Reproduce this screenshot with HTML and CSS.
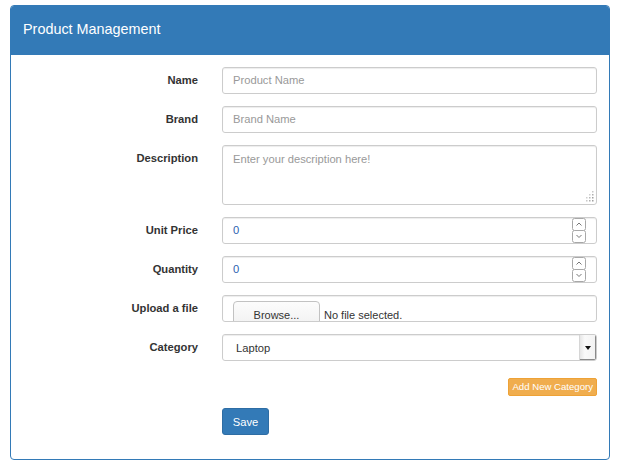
FILE: index.html
```html
<!DOCTYPE html>
<html lang="en">
<head>
<meta charset="utf-8">
<title>Product Management</title>
<link rel="stylesheet" href="styles.css">
</head>
<body>
<div class="panel">
  <div class="panel-heading">Product Management</div>
  <div class="panel-body">
    <form class="form">
      <label class="lbl">Name</label>
      <div class="control"><span class="ph">Product Name</span></div>

      <label class="lbl">Brand</label>
      <div class="control"><span class="ph">Brand Name</span></div>

      <label class="lbl">Description</label>
      <div class="control textarea">
        <span class="ph ta-ph">Enter your description here!</span>
        <svg class="grip" width="10" height="11" viewBox="0 0 10 11">
          <rect x="8" y="0" width="1.5" height="1.5" fill="#c8c8c8"/>
          <rect x="8" y="3" width="1.5" height="1.5" fill="#b0b0b0"/>
          <rect x="5" y="3" width="1.5" height="1.5" fill="#d0d0d0"/>
          <rect x="8" y="6" width="1.5" height="1.5" fill="#a0a0a0"/>
          <rect x="5" y="6" width="1.5" height="1.5" fill="#b8b8b8"/>
          <rect x="2" y="6" width="1.5" height="1.5" fill="#d0d0d0"/>
          <rect x="8" y="9" width="1.5" height="1.5" fill="#a0a0a0"/>
          <rect x="5" y="9" width="1.5" height="1.5" fill="#b0b0b0"/>
          <rect x="2" y="9" width="1.5" height="1.5" fill="#c8c8c8"/>
        </svg>
      </div>

      <label class="lbl">Unit Price</label>
      <div class="control number">
        <span class="val">0</span>
        <svg class="spin" width="14" height="25" viewBox="0 0 14 25">
          <rect x="0.5" y="0.5" width="13" height="12" rx="2" fill="#fff" stroke="#a8a8a8"/>
          <rect x="0.5" y="12.5" width="13" height="12" rx="2" fill="#fff" stroke="#a8a8a8"/>
          <path d="M4.5 7.5 L7 5 L9.5 7.5" fill="none" stroke="#777" stroke-width="1"/>
          <path d="M4.5 17 L7 19.5 L9.5 17" fill="none" stroke="#777" stroke-width="1"/>
        </svg>
      </div>

      <label class="lbl">Quantity</label>
      <div class="control number">
        <span class="val">0</span>
        <svg class="spin" width="14" height="25" viewBox="0 0 14 25">
          <rect x="0.5" y="0.5" width="13" height="12" rx="2" fill="#fff" stroke="#a8a8a8"/>
          <rect x="0.5" y="12.5" width="13" height="12" rx="2" fill="#fff" stroke="#a8a8a8"/>
          <path d="M4.5 7.5 L7 5 L9.5 7.5" fill="none" stroke="#777" stroke-width="1"/>
          <path d="M4.5 17 L7 19.5 L9.5 17" fill="none" stroke="#777" stroke-width="1"/>
        </svg>
      </div>

      <label class="lbl">Upload a file</label>
      <div class="control file">
        <span class="browse">Browse...</span>
        <span class="nofile">No file selected.</span>
      </div>

      <label class="lbl">Category</label>
      <div class="control select">
        <span class="sel-val">Laptop</span>
        <span class="sel-arrow"><span class="tri"></span></span>
      </div>

      <div class="add-row"><button type="button" class="btn-add">Add New Category</button></div>
      <div class="save-row"><button type="button" class="btn-save">Save</button></div>
    </form>
  </div>
</div>
</body>
</html>
```
FILE: styles.css
```css
* { box-sizing: border-box; }
html, body { margin: 0; padding: 0; background: #fff; }
body {
  font-family: "Liberation Sans", Arial, sans-serif;
  font-size: 11.2px;
  color: #333;
}
.panel {
  width: 600px;
  margin: 5px 0 0 10px;
  border: 1px solid #337ab7;
  border-radius: 4px;
  overflow: hidden;
}
.panel-heading {
  height: 49px;
  background: #337ab7;
  color: #fff;
  font-size: 14.4px;
  display: flex;
  align-items: center;
  padding: 0 12px 3px;
}
.panel-body {
  padding: 12px 12px 24px 0;
}
.form {
  display: grid;
  grid-template-columns: 187px 375px;
  column-gap: 24px;
  row-gap: 12px;
  margin: 0;
}
.lbl {
  text-align: right;
  font-weight: bold;
  padding-top: 6px;
  line-height: 15px;
  color: #333;
}
.control {
  height: 27px;
  border: 1px solid #ccc;
  border-radius: 3px;
  box-shadow: inset 0 1px 1px rgba(0,0,0,.075);
  padding: 0 10px;
  line-height: 25px;
  display: flex;
  align-items: center;
  background: #fff;
}
.ph { color: #999; }
.textarea {
  height: 60px;
  padding: 0;
  align-items: stretch;
  justify-content: space-between;
}
.ta-ph {
  padding: 5px 10px;
  line-height: 16px;
}
.grip {
  align-self: flex-end;
  margin: 0 2px 2px 0;
}
.number { justify-content: space-between; }
.val { color: #2d62b0; }
.file {
  align-items: flex-start;
  overflow: hidden;
  padding: 0 0 0 10px;
}
.browse {
  flex: none;
  width: 87px;
  height: 28px;
  margin-top: 5px;
  border: 1px solid #c2c2c2;
  border-radius: 4px;
  background: linear-gradient(#fcfcfc, #f0f0f0);
  text-align: center;
  line-height: 26px;
  font-size: 11px;
  color: #333;
}
.nofile {
  margin: 5px 0 0 4px;
  line-height: 28px;
  font-size: 11px;
  color: #333;
}
.select {
  padding: 0 0 0 13px;
  justify-content: space-between;
  align-items: stretch;
  overflow: hidden;
}
.sel-val { line-height: 26px; color: #333; }
.sel-arrow {
  width: 17px;
  display: flex;
  align-items: center;
  justify-content: center;
  background: linear-gradient(90deg, #e6e6e6, #fafafa 30%, #f2f2f2);
  border-left: 1px solid #d6d6d6;
  box-shadow: inset -1px -1px 0 #8a8a8a;
}
.tri {
  width: 0;
  height: 0;
  border-left: 3px solid transparent;
  border-right: 3px solid transparent;
  border-top: 4px solid #111;
  margin-right: 1px;
}
.add-row {
  grid-column: 2;
  display: flex;
  justify-content: flex-end;
  margin-top: 5px;
}
.btn-add {
  font-family: "Liberation Sans", Arial, sans-serif;
  font-size: 9.6px;
  line-height: 14px;
  height: 18px;
  padding: 0 3px;
  color: #fff;
  background: #f0ad4e;
  border: 1px solid #eea236;
  border-radius: 2px;
}
.save-row {
  grid-column: 2;
  display: flex;
}
.btn-save {
  font-family: "Liberation Sans", Arial, sans-serif;
  font-size: 11.2px;
  height: 27px;
  width: 47px;
  padding: 0;
  color: #fff;
  background: #337ab7;
  border: 1px solid #2e6da4;
  border-radius: 3px;
}
```
